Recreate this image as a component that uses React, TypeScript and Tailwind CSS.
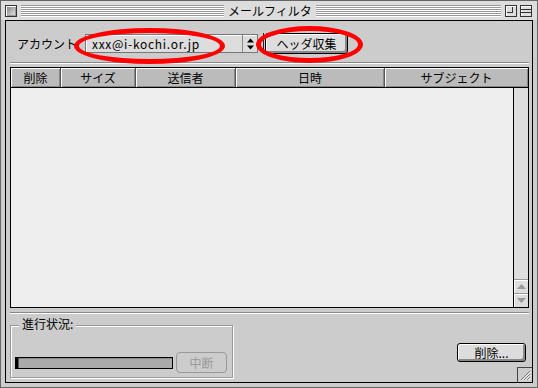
import React from "react";

const bevel = "shadow-[inset_1px_1px_0_#ffffff,inset_-1px_-1px_0_#888888]";

function HeaderCell({ w, label, last }: { w: string; label: string; last?: boolean }) {
  return (
    <div
      className={`${w} h-full flex items-center justify-center bg-[#bbbbbb] ${bevel} ${last ? "" : "border-r border-[#555555]"} text-[12px] leading-none text-black`}
    >
      {label}
    </div>
  );
}

export default function App() {
  return (
    <div className="w-[538px] h-[388px] bg-[#cccccc] border border-[#666666] flex flex-col relative overflow-hidden font-['Noto_Sans_CJK_JP','Noto_Sans',sans-serif] text-black select-none">
      {/* Title bar */}
      <div className="h-[19px] flex items-center pl-[4px] pr-[5px] bg-[#dddddd]">
        {/* close box */}
        <div className="w-[12px] h-[12px] border border-[#333333] bg-[linear-gradient(135deg,#777777,#eeeeee)] shadow-[inset_1px_1px_0_#ffffff,inset_-1px_-1px_0_#999999]" />
        <div className="ml-[4px] w-[203px] h-[12px] bg-[image:repeating-linear-gradient(to_bottom,#999999_0px,#999999_1px,#ffffff_1px,#ffffff_2px)]" />
        <div className="mx-[4px] text-[12px] leading-none tracking-[0px] whitespace-nowrap">メールフィルタ</div>
        <div className="flex-1 h-[12px] bg-[image:repeating-linear-gradient(to_bottom,#999999_0px,#999999_1px,#ffffff_1px,#ffffff_2px)]" />
        {/* zoom box */}
        <div className="ml-[4px] w-[12px] h-[12px] border border-[#333333] bg-[#dddddd] shadow-[inset_1px_1px_0_#ffffff] relative">
          <div className="absolute left-[1px] top-[1px] w-[6px] h-[6px] border-r border-b border-[#333333]" />
        </div>
        {/* collapse box */}
        <div className="ml-[3px] w-[12px] h-[12px] border border-[#333333] bg-[#dddddd] flex flex-col justify-center gap-[2px] shadow-[inset_1px_1px_0_#ffffff]">
          <div className="h-[1px] bg-[#333333]" />
          <div className="h-[1px] bg-[#333333]" />
        </div>
      </div>

      {/* Content */}
      <div className="mx-[4px] mb-[4px] border border-black flex-1 flex flex-col relative bg-[#cccccc]">
        {/* Toolbar */}
        <div className="pt-[12px] flex items-center h-[33px]">
          <div className="ml-[11px] w-[60px] text-[12px] leading-none whitespace-nowrap">アカウント</div>
          <div className="ml-[8px] w-[173px] h-[19px] flex border border-[#777777] bg-[#dddddd] shadow-[inset_1px_1px_0_#ffffff]">
            <div className="flex-1 flex items-center pl-[6px] text-[12px] leading-none tracking-[0.7px]">xxx@i-kochi.or.jp</div>
            <div className="w-[15px] h-full border-l border-[#888888] flex items-center justify-center">
              <svg width="7" height="12" viewBox="0 0 7 12">
                <polygon points="3.5,0.5 7,4.5 0,4.5" fill="#000" />
                <polygon points="0,7.5 7,7.5 3.5,11.5" fill="#000" />
              </svg>
            </div>
          </div>
          <div className="ml-[5px] w-[1px] h-[21px] bg-[#222222]" />
          <div className="ml-[1px] w-[83px] h-[21px] rounded-[3px] border border-black bg-[#dddddd] shadow-[inset_1px_1px_0_#ffffff,inset_-2px_-2px_0_#888888] flex items-center justify-center text-[12px] leading-none">
            ヘッダ収集
          </div>
        </div>

        {/* separator */}
        <div className="mt-[8px] ml-[4px] w-[519px] h-[2px] border-t border-[#888888] border-b border-b-white" />

        {/* Table */}
        <div className="mt-[3px] ml-[4px] w-[519px] h-[241px] border border-black flex flex-col">
          <div className="h-[20px] flex border-b border-black">
            <HeaderCell w="w-[50px]" label="削除" />
            <HeaderCell w="w-[75px]" label="サイズ" />
            <HeaderCell w="w-[100px]" label="送信者" />
            <HeaderCell w="w-[149px]" label="日時" />
            <HeaderCell w="w-[143px]" label="サブジェクト" last />
          </div>
          <div className="flex-1 flex">
            <div className="flex-1 bg-[#eeeeee]" />
            <div className="w-[15px] border-l border-black bg-[#dddddd] flex flex-col justify-end">
              <div className="h-[14px] border-t border-[#999999] flex items-center justify-center shadow-[inset_1px_1px_0_#ffffff]">
                <svg width="9" height="5" viewBox="0 0 9 5">
                  <polygon points="4.5,0 9,5 0,5" fill="#999999" />
                </svg>
              </div>
              <div className="h-[14px] border-t border-[#999999] flex items-center justify-center shadow-[inset_1px_1px_0_#ffffff]">
                <svg width="9" height="5" viewBox="0 0 9 5">
                  <polygon points="0,0 9,0 4.5,5" fill="#999999" />
                </svg>
              </div>
            </div>
          </div>
        </div>

        {/* separator */}
        <div className="mt-[4px] ml-[4px] w-[519px] h-[2px] border-t border-[#888888] border-b border-b-white" />

        {/* Bottom area */}
        <div className="ml-[4px] w-[519px] flex justify-between items-start">
          <div className="mt-[11px] w-[223px] h-[53px] relative border border-[#999999] shadow-[1px_1px_0_#ffffff,inset_1px_1px_0_#ffffff] flex items-end pb-[4px] pl-[4px]">
            <div className="absolute left-[8px] top-[-10px] px-[3px] bg-[#cccccc] text-[12px] leading-[16px] whitespace-nowrap">
              進行状況:
            </div>
            <div className="flex items-center">
              <div className="w-[158px] h-[12px] border border-black bg-[#aaaaaa] flex shadow-[inset_0_1px_0_#888888]">
                <div className="w-[2px] h-full bg-black" />
                <div className="w-[1px] h-full bg-[#555555]" />
              </div>
              <div className="ml-[3px] w-[51px] h-[21px] rounded-[4px] border border-[#999999] flex items-center justify-center text-[12px] leading-none text-[#999999]">
                中断
              </div>
            </div>
          </div>
          <div className="mt-[29px] mr-[3px] w-[69px] h-[19px] rounded-[3px] border border-black bg-[#dddddd] shadow-[inset_1px_1px_0_#ffffff,inset_-2px_-2px_0_#888888] flex items-center justify-center text-[12px] leading-none">
            削除...
          </div>
        </div>

        {/* grow box */}
        <div className="absolute right-0 bottom-0 w-[15px] h-[15px] border-t border-l border-[#444444] bg-[#cccccc]">
          <svg width="14" height="14" viewBox="0 0 14 14" className="block">
            <line x1="3" y1="12" x2="12" y2="3" stroke="#777777" strokeWidth="1" />
            <line x1="4" y1="12.5" x2="12.5" y2="4" stroke="#ffffff" strokeWidth="1" />
            <line x1="6" y1="12" x2="12" y2="6" stroke="#777777" strokeWidth="1" />
            <line x1="7" y1="12.5" x2="12.5" y2="7" stroke="#ffffff" strokeWidth="1" />
            <line x1="9" y1="12" x2="12" y2="9" stroke="#777777" strokeWidth="1" />
            <line x1="10" y1="12.5" x2="12.5" y2="10" stroke="#ffffff" strokeWidth="1" />
          </svg>
        </div>
      </div>

      {/* red annotation ellipses */}
      <div className="absolute left-[73px] top-[27px] w-[151px] h-[36px] rounded-[50%] border-[5px] border-[#ff0000] pointer-events-none" />
      <div className="absolute left-[255px] top-[25px] w-[107px] h-[37px] rounded-[50%] border-[5px] border-[#ff0000] pointer-events-none" />
    </div>
  );
}
